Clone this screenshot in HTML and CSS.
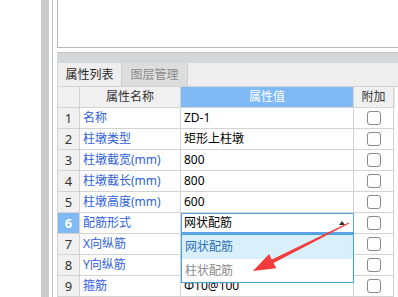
FILE: index.html
```html
<!DOCTYPE html>
<html lang="zh">
<head>
<meta charset="utf-8">
<title>属性列表</title>
<link rel="stylesheet" href="styles.css">
</head>
<body>
<div class="page">
  <div class="left-blank"></div>
  <div class="splitter"></div>
  <div class="gutter"></div>

  <div class="main">
    <div class="top-panel"></div>
    <div class="strip"></div>

    <div class="tabs">
      <div class="tab active">属性列表</div>
      <div class="tab">图层管理</div>
    </div>

    <div class="grid">
      <div class="row head">
        <div class="cell num"></div>
        <div class="cell name">属性名称</div>
        <div class="cell value">属性值</div>
        <div class="cell extra">附加</div>
        <div class="cell rest"></div>
      </div>

      <div class="row">
        <div class="cell num">1</div>
        <div class="cell name">名称</div>
        <div class="cell value">ZD-1</div>
        <div class="cell extra"><span class="check"></span></div>
        <div class="cell rest"></div>
      </div>
      <div class="row">
        <div class="cell num">2</div>
        <div class="cell name">柱墩类型</div>
        <div class="cell value">矩形上柱墩</div>
        <div class="cell extra"><span class="check"></span></div>
        <div class="cell rest"></div>
      </div>
      <div class="row">
        <div class="cell num">3</div>
        <div class="cell name">柱墩截宽(mm)</div>
        <div class="cell value">800</div>
        <div class="cell extra"><span class="check"></span></div>
        <div class="cell rest"></div>
      </div>
      <div class="row">
        <div class="cell num">4</div>
        <div class="cell name">柱墩截长(mm)</div>
        <div class="cell value">800</div>
        <div class="cell extra"><span class="check"></span></div>
        <div class="cell rest"></div>
      </div>
      <div class="row">
        <div class="cell num">5</div>
        <div class="cell name">柱墩高度(mm)</div>
        <div class="cell value">600</div>
        <div class="cell extra"><span class="check"></span></div>
        <div class="cell rest"></div>
      </div>
      <div class="row selected">
        <div class="cell num">6</div>
        <div class="cell name">配筋形式</div>
        <div class="cell value editing">
          <span>网状配筋</span>
          <span class="caret"></span>
          <div class="dropdown">
            <div class="option hover">网状配筋</div>
            <div class="option">柱状配筋</div>
          </div>
        </div>
        <div class="cell extra"><span class="check"></span></div>
        <div class="cell rest"></div>
      </div>
      <div class="row">
        <div class="cell num">7</div>
        <div class="cell name">X向纵筋</div>
        <div class="cell value"></div>
        <div class="cell extra"><span class="check"></span></div>
        <div class="cell rest"></div>
      </div>
      <div class="row">
        <div class="cell num">8</div>
        <div class="cell name">Y向纵筋</div>
        <div class="cell value"></div>
        <div class="cell extra"><span class="check"></span></div>
        <div class="cell rest"></div>
      </div>
      <div class="row">
        <div class="cell num">9</div>
        <div class="cell name">箍筋</div>
        <div class="cell value">Φ10@100</div>
        <div class="cell extra"><span class="check"></span></div>
        <div class="cell rest"></div>
      </div>
    </div>
  </div>
</div>

<!-- red arrow drawn over the screenshot -->
<svg class="arrow" width="398" height="297" viewBox="0 0 398 297">
  <polygon fill="#f23c3c" points="348.8,222.6 349.2,223.6 273.6,263.0 276.3,268.3 253,271 269.1,254.0 271.8,259.4"/>
</svg>
</body>
</html>
```

FILE: styles.css
```css
* {
  margin: 0;
  padding: 0;
  box-sizing: border-box;
}

html, body {
  width: 398px;
  height: 297px;
  overflow: hidden;
  background: #fff;
}

body {
  position: relative;
  font-family: "Noto Sans", "Noto Sans CJK SC", sans-serif;
  font-size: 12px;
  color: #000;
}

.page {
  display: flex;
  height: 297px;
}

.left-blank {
  width: 41px;
  background: #fff;
}

.splitter {
  width: 8px;
  background: #cacaca;
}

.gutter {
  width: 1px;
  margin: 0 4px 0 3px;
  background: #c4c4c4;
}

.main {
  flex: 1;
  display: flex;
  flex-direction: column;
  min-width: 0;
}

.top-panel {
  height: 48px;
  border-left: 1px solid #b8b8b8;
  border-bottom: 1px solid #b8b8b8;
  margin-bottom: 4px;
}

.strip {
  height: 11px;
  background: #d5d6da;
  border-top: 1px solid #c4c5c9;
}

.tabs {
  display: flex;
  height: 24px;
  background: #eeeeee;
  border-bottom: 1px solid #d3d3d3;
  border-left: 1px solid #d3d3d3;
}

.tab {
  width: 64px;
  line-height: 23px;
  text-align: center;
  color: #8a8a8a;
  background: #dddddd;
  border-right: 1px solid #cfcfcf;
  font-size: 12px;
}

.tab.active {
  width: 64px;
  color: #2a2a2a;
  background: #eeeeee;
}

.tab + .tab {
  width: 66px;
}

.row {
  display: flex;
  height: 21px;
  border-left: 1px solid #d3d3d3;
}

.cell {
  height: 21px;
  line-height: 20px;
  border-right: 1px solid #d3d3d3;
  border-bottom: 1px solid #d3d3d3;
  white-space: nowrap;
  overflow: hidden;
}

.num {
  width: 22px;
  background: #f0f0f0;
  text-align: center;
  color: #333;
  font-size: 13px;
}

.name {
  width: 101px;
  padding-left: 3px;
  color: #2f5fdc;
}

.value {
  width: 173px;
  padding-left: 3px;
}

.extra {
  width: 40px;
  display: flex;
  align-items: center;
  justify-content: center;
}

.rest {
  flex: 1;
  border-bottom: none;
  border-right: none;
}

.head .cell {
  background: #f0f0f0;
  text-align: center;
  color: #333;
  padding: 0;
}

.head .value {
  background: #7fbaf6;
  color: #fff;
}

.head .rest {
  background: #fff;
  border-left: 1px solid #e2e2e2;
}

.check {
  width: 14px;
  height: 14px;
  border: 1px solid #8a8a8a;
  border-radius: 3px;
  background: #fff;
}

.selected .num {
  background: #7fbaf6;
  color: #fff;
  font-weight: bold;
}

.value.editing {
  position: relative;
  overflow: visible;
  display: flex;
  justify-content: space-between;
  align-items: center;
  padding: 0 8px 0 3px;
  box-shadow: inset 1px 0 0 #5ea2e4, inset 0 1px 0 #5ea2e4, inset 0 -1px 0 #5ea2e4;
  border-right-color: #5ea2e4;
  border-bottom-color: #5ea2e4;
}

.caret {
  width: 0;
  height: 0;
  border-left: 3px solid transparent;
  border-right: 3px solid transparent;
  border-bottom: 4px solid #333;
}

.dropdown {
  position: absolute;
  top: 21px;
  left: 0;
  width: 173px;
  height: 49px;
  background: #fff;
  border: 1px solid #45a3d9;
  z-index: 5;
}

.option {
  height: 24px;
  line-height: 23px;
  padding-left: 3px;
  color: #8a8a8a;
}

.option.hover {
  background: #d9f0fb;
  color: #2c6fb6;
}

.arrow {
  position: absolute;
  top: 0;
  left: 0;
  pointer-events: none;
  z-index: 10;
}
```
